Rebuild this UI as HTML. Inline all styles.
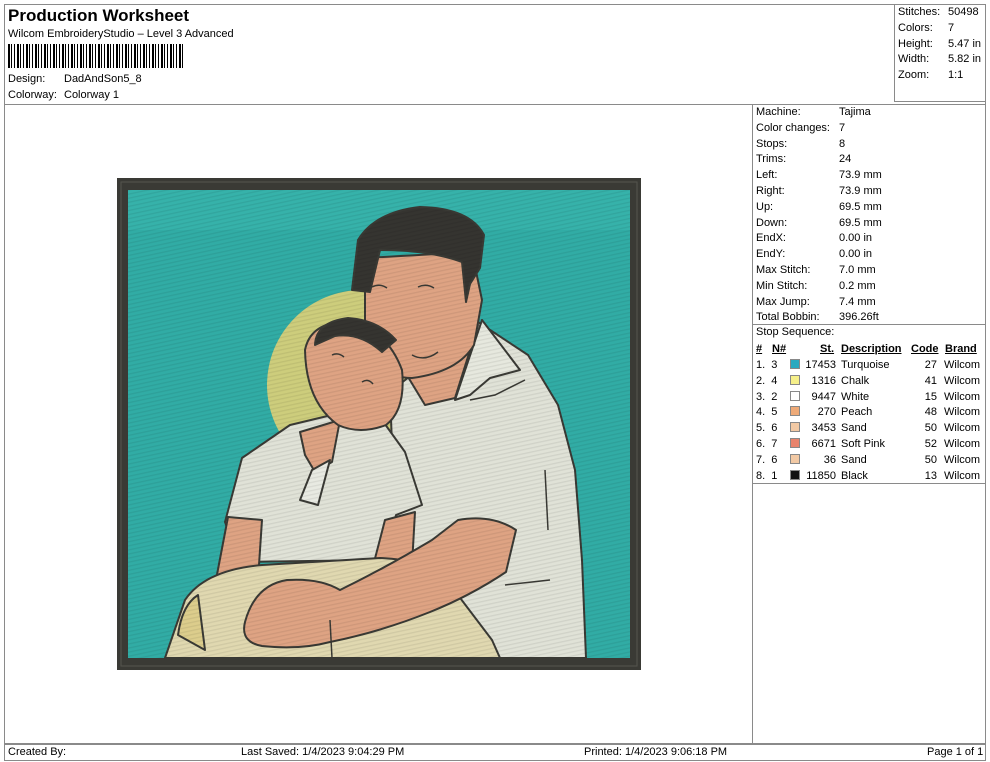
<!DOCTYPE html>
<html><head><meta charset="utf-8"><style>
*{margin:0;padding:0;box-sizing:border-box}
body{width:990px;height:762px;background:#fff;position:relative;overflow:hidden;font-family:"Liberation Sans",Arial,sans-serif;font-size:11px;color:#000}
.a{position:absolute;white-space:nowrap}
.ln{position:absolute;background:#8a8a8a}
.sw{position:absolute;width:10px;height:10px;border:1px solid #888}
</style></head><body>
<div class="ln" style="left:4px;top:4px;width:982px;height:1px"></div>
<div class="ln" style="left:4px;top:4px;width:1px;height:757px"></div>
<div class="ln" style="left:985px;top:4px;width:1px;height:757px"></div>
<div class="ln" style="left:894px;top:4px;width:1px;height:98px"></div>
<div class="ln" style="left:894px;top:101px;width:92px;height:1px"></div>
<div class="ln" style="left:4px;top:104px;width:982px;height:1px"></div>
<div class="ln" style="left:752px;top:104px;width:1px;height:640px"></div>
<div class="ln" style="left:752px;top:324px;width:234px;height:1px"></div>
<div class="ln" style="left:752px;top:483px;width:234px;height:1px"></div>
<div class="ln" style="left:4px;top:743px;width:982px;height:2px"></div>
<div class="ln" style="left:4px;top:760px;width:982px;height:1px"></div>

<div class="a" style="left:8px;top:6px;font-size:17px;font-weight:bold">Production Worksheet</div>
<div class="a" style="left:8px;top:28px">Wilcom EmbroideryStudio – Level 3 Advanced</div>
<div class="a" style="left:8px;top:44px;width:175px;height:24px;background:repeating-linear-gradient(90deg,#000 0 2px,#fff 2px 3px,#000 3px 4px,#fff 4px 6px,#000 6px 7px,#fff 7px 9px)"></div>
<div class="a" style="left:8px;top:73px">Design:</div><div class="a" style="left:64px;top:73px">DadAndSon5_8</div>
<div class="a" style="left:8px;top:89px">Colorway:</div><div class="a" style="left:64px;top:89px">Colorway 1</div>

<div class="a" style="left:898px;top:5px;line-height:15.8px">Stitches:<br>Colors:<br>Height:<br>Width:<br>Zoom:</div>
<div class="a" style="left:948px;top:5px;line-height:15.8px">50498<br>7<br>5.47 in<br>5.82 in<br>1:1</div>

<div class="a" style="left:756px;top:105px;line-height:15.8px">Machine:<br>Color changes:<br>Stops:<br>Trims:<br>Left:<br>Right:<br>Up:<br>Down:<br>EndX:<br>EndY:<br>Max Stitch:<br>Min Stitch:<br>Max Jump:<br>Total Bobbin:</div>
<div class="a" style="left:839px;top:105px;line-height:15.8px">Tajima<br>7<br>8<br>24<br>73.9 mm<br>73.9 mm<br>69.5 mm<br>69.5 mm<br>0.00 in<br>0.00 in<br>7.0 mm<br>0.2 mm<br>7.4 mm<br>396.26ft</div>
<div class="a" style="left:756px;top:326px">Stop Sequence:</div>
<div class="a" style="left:756px;top:343px;font-weight:bold;text-decoration:underline">#</div>
<div class="a" style="left:772px;top:343px;font-weight:bold;text-decoration:underline">N#</div>
<div class="a" style="left:820px;top:343px;font-weight:bold;text-decoration:underline">St.</div>
<div class="a" style="left:841px;top:343px;font-weight:bold;text-decoration:underline">Description</div>
<div class="a" style="left:911px;top:343px;font-weight:bold;text-decoration:underline">Code</div>
<div class="a" style="left:945px;top:343px;font-weight:bold;text-decoration:underline">Brand</div>
<div class="a" style="left:756px;top:358px;line-height:15.8px">1.&nbsp; 3<br>2.&nbsp; 4<br>3.&nbsp; 2<br>4.&nbsp; 5<br>5.&nbsp; 6<br>6.&nbsp; 7<br>7.&nbsp; 6<br>8.&nbsp; 1</div>
<div class="sw" style="left:790px;top:359px;background:#2aa9c0"></div>
<div class="sw" style="left:790px;top:375px;background:#f6f08a"></div>
<div class="sw" style="left:790px;top:391px;background:#fff"></div>
<div class="sw" style="left:790px;top:406px;background:#eeaa78"></div>
<div class="sw" style="left:790px;top:422px;background:#f2c9a4"></div>
<div class="sw" style="left:790px;top:438px;background:#e8836c"></div>
<div class="sw" style="left:790px;top:454px;background:#f2c9a4"></div>
<div class="sw" style="left:790px;top:470px;background:#111"></div>
<div class="a" style="left:800px;top:358px;width:36px;text-align:right;line-height:15.8px">17453<br>1316<br>9447<br>270<br>3453<br>6671<br>36<br>11850</div>
<div class="a" style="left:841px;top:358px;line-height:15.8px">Turquoise<br>Chalk<br>White<br>Peach<br>Sand<br>Soft Pink<br>Sand<br>Black</div>
<div class="a" style="left:905px;top:358px;width:32px;text-align:right;line-height:15.8px">27<br>41<br>15<br>48<br>50<br>52<br>50<br>13</div>
<div class="a" style="left:944px;top:358px;line-height:15.8px">Wilcom<br>Wilcom<br>Wilcom<br>Wilcom<br>Wilcom<br>Wilcom<br>Wilcom<br>Wilcom</div>

<div class="a" style="left:8px;top:746px">Created By:</div>
<div class="a" style="left:241px;top:746px">Last Saved: 1/4/2023 9:04:29 PM</div>
<div class="a" style="left:584px;top:746px">Printed: 1/4/2023 9:06:18 PM</div>
<div class="a" style="left:927px;top:746px">Page 1 of 1</div>

<svg class="a" style="left:0;top:0" width="990" height="762" viewBox="0 0 990 762">
<defs><pattern id="tx" width="4" height="4" patternUnits="userSpaceOnUse" patternTransform="rotate(-12)"><rect width="4" height="1.3" fill="#000" opacity="0.07"/></pattern></defs>
<rect x="117" y="178" width="524" height="492" fill="#3a3a35"/>
<rect x="121" y="182" width="516" height="484" fill="none" stroke="#55554f" stroke-width="1"/>
<rect x="128" y="190" width="502" height="468" fill="#31aca5"/>
<rect x="128" y="190" width="502" height="40" fill="#3ab5ad" opacity="0.6"/>
<circle cx="362" cy="385" r="95" fill="#cdcd7c"/>
<g stroke="#3a3a35" stroke-width="2" stroke-linejoin="round">
<path d="M390 392 L478 322 L528 355 L558 405 L575 470 L582 560 L586 658 L400 658 Z" fill="#e0e2d7"/>
<path d="M482 320 L520 370 L490 378 L470 395 L455 400 Z" fill="#e6e8de"/>
<path d="M405 372 L460 340 L470 325 L478 325 L455 398 L425 405 Z" fill="#dea383"/>
<path d="M365 258 L365 345 Q378 378 412 378 Q458 372 474 345 L482 300 L472 252 Z" fill="#dea383"/>
<path d="M352 290 L358 240 Q375 212 420 207 Q470 208 484 235 L480 268 L470 284 L466 302 L462 262 Q430 250 380 250 L370 292 Z" fill="#353430"/>
<path d="M225 522 L242 458 L290 425 L340 413 L382 420 L405 452 L422 505 L396 515 L385 560 L240 562 Z" fill="#e0e2d7"/>
<path d="M300 432 L340 420 L332 462 L315 472 L305 455 Z" fill="#dea383"/>
<path d="M300 500 L312 470 L330 460 L318 505 Z" fill="#e8eae2"/>
<path d="M305 350 Q310 325 340 322 Q385 324 402 370 Q406 410 386 425 Q360 435 338 425 Q306 402 305 350 Z" fill="#dea383"/>
<path d="M315 345 Q316 322 348 318 Q378 320 396 340 L382 352 Q360 332 335 336 Z" fill="#353430"/>
<path d="M228 517 L262 520 L258 580 L215 585 Z" fill="#dea383"/>
<path d="M385 520 L415 512 L412 565 L372 570 Z" fill="#dea383"/>
<path d="M165 658 L185 600 Q205 570 262 565 L380 558 Q425 560 445 578 L492 640 L500 658 Z" fill="#e0d8b0"/>
<path d="M178 635 Q182 605 198 595 L205 650 Z" fill="#dccd8c"/>
<path d="M245 622 Q255 585 287 580 Q320 578 340 590 Q385 568 432 540 L458 520 Q492 514 516 530 L506 572 Q470 596 430 612 Q380 632 330 642 Q300 650 262 646 Q240 642 245 622 Z" fill="#dea383"/>
</g>
<g fill="none" stroke="#3a3a35" stroke-width="1.5">
<path d="M372 287 Q380 283 387 288"/><path d="M418 287 Q426 283 434 288"/><path d="M412 355 Q425 362 438 352"/>
<path d="M332 355 Q338 352 344 357"/><path d="M362 382 Q368 378 373 384"/>
<path d="M470 400 L495 395 L525 380"/><path d="M545 470 L548 530"/><path d="M505 585 L550 580"/>
<path d="M330 620 L332 658"/>
</g>
<rect x="128" y="190" width="502" height="468" fill="url(#tx)"/>
</svg>
</body></html>
